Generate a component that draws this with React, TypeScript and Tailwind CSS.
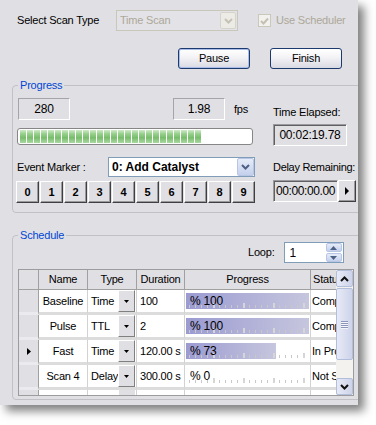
import React from "react";

const rows = [
  { name: "Baseline", type: "Time", dur: "100", pct: 100, status: "Completed" },
  { name: "Pulse", type: "TTL", dur: "2", pct: 100, status: "Completed" },
  { name: "Fast", type: "Time", dur: "120.00 s", pct: 73, status: "In Progress", current: true },
  { name: "Scan 4", type: "Delay", dur: "300.00 s", pct: 0, status: "Not Started" },
];

function Chevron({ color = "#4d6185", up = false }: { color?: string; up?: boolean }) {
  return (
    <svg width="9" height="6" viewBox="0 0 9 6">
      <path d={up ? "M1 5 L4.5 1.5 L8 5" : "M1 1 L4.5 4.5 L8 1"} fill="none" stroke={color} strokeWidth="2" />
    </svg>
  );
}

function XpButton({ label, focused }: { label: string; focused?: boolean }) {
  return (
    <button
      className={`w-[72px] h-[21px] rounded-[3px] border border-[#1c3a6e] bg-[linear-gradient(to_bottom,#ffffff,#f3f3f6_45%,#d9d9e2)] text-[11px] leading-none ${
        focused ? "shadow-[inset_0_0_0_1px_#a9bde8]" : ""
      }`}
    >
      {label}
    </button>
  );
}

function Legend({ text }: { text: string }) {
  return (
    <span className="absolute left-[5px] -top-[8px] px-[2px] bg-[#e0dfe3] text-[#0046d5] leading-[14px]">
      {text}
    </span>
  );
}

function ProgressCell({ pct }: { pct: number }) {
  return (
    <div className="relative h-[16px] mt-[3px] ml-[1px] mr-[1px]">
      {pct > 0 && (
        <div
          className="h-full bg-[linear-gradient(to_right,#9b9bd2,#c6c6de)]"
          style={{ width: `${pct}%` }}
        />
      )}
      <div className="absolute left-[3px] right-[4px] bottom-[1px] h-[3px] bg-[repeating-linear-gradient(to_right,#c8c8c8_0,#c8c8c8_1px,transparent_1px,transparent_6px)]" />
      <div className="absolute left-[27px] right-[4px] bottom-[1px] h-[5px] bg-[repeating-linear-gradient(to_right,#d6d6d6_0,#d6d6d6_2px,transparent_2px,transparent_30px)]" />
      <span className="absolute left-[4px] top-0 h-full flex items-center text-[12px] leading-none">
        % {pct}
      </span>
    </div>
  );
}

export default function App() {
  return (
    <div className="w-[376px] h-[425px] bg-white font-['Liberation_Sans',Arial,sans-serif] text-[11px] tracking-[-0.2px] text-black">
      <div className="w-[358px] h-[405px] bg-[#e0dfe3] overflow-hidden shadow-[6px_6px_9px_rgba(0,0,0,0.5)] flex flex-col">
        {/* scan type row */}
        <div className="flex items-center h-[21px] mt-[10px] pl-[17px]">
          <span className="w-[99px]">Select Scan Type</span>
          <div className="w-[122px] h-[21px] border border-[#c9c7ba] bg-[#e3e2e6] flex items-center justify-between">
            <span className="pl-[3px] text-[#aca899]">Time Scan</span>
            <div className="w-[16px] h-[17px] mr-[1px] rounded-[2px] border border-[#d6d4ca] bg-[#ecebe6] flex items-center justify-center">
              <Chevron color="#c5c2b4" />
            </div>
          </div>
          <div className="ml-[20px] w-[13px] h-[13px] border border-[#cac8bb] bg-[#f2f1ed] flex items-center justify-center">
            <svg width="9" height="8" viewBox="0 0 9 8">
              <path d="M1 4 L3.5 6.5 L8 1.5" fill="none" stroke="#c3c0b2" strokeWidth="2" />
            </svg>
          </div>
          <span className="ml-[5px] text-[#aca899]">Use Scheduler</span>
        </div>

        {/* buttons */}
        <div className="flex gap-[20px] mt-[17px] pl-[178px]">
          <XpButton label="Pause" focused />
          <XpButton label="Finish" />
        </div>

        {/* progress group */}
        <div className="relative mt-[16px] ml-[12px] w-[360px] h-[128px] shrink-0 border border-[#c2c1c6] rounded-[4px]">
          <Legend text="Progress" />
          <div className="flex pt-[12px]">
            <div className="flex flex-col w-[256px] ml-[4px]">
              <div className="flex items-center h-[22px]">
                <div className="ml-[1px] w-[52px] h-[22px] border border-t-[#a5a4a8] border-l-[#a5a4a8] border-b-white border-r-white flex items-center justify-center text-[12px]">
                  280
                </div>
                <div className="ml-[103px] w-[52px] h-[22px] border border-t-[#a5a4a8] border-l-[#a5a4a8] border-b-white border-r-white flex items-center justify-center text-[12px]">
                  1.98
                </div>
                <span className="ml-[9px]">fps</span>
              </div>
              <div className="mt-[8px] w-[236px] h-[17px] rounded-[3px] border border-[#868686] bg-white flex items-center gap-[1px] pl-[2px]">
                {Array.from({ length: 26 }).map((_, i) => (
                  <div
                    key={i}
                    className="w-[6px] h-[13px] bg-[linear-gradient(to_bottom,#cfeac9,#96cf8b_30%,#79bc6d_60%,#a9d9a0)]"
                  />
                ))}
              </div>
              <div className="mt-[12px] flex items-center h-[20px]">
                <span className="w-[91px]">Event Marker :</span>
                <div className="w-[147px] h-[20px] border border-[#7f9db9] bg-white flex items-center justify-between">
                  <span className="pl-[3px] font-bold text-[12px] leading-none tracking-normal">0: Add Catalyst</span>
                  <div className="w-[17px] h-[18px] rounded-[2px] border border-[#b8c6e6] bg-[linear-gradient(to_bottom,#e6ecf8,#c4d0ec)] flex items-center justify-center">
                    <Chevron />
                  </div>
                </div>
              </div>
              <div className="mt-[4px] -ml-[1px] flex gap-[1px]">
                {Array.from({ length: 10 }).map((_, i) => (
                  <div
                    key={i}
                    className="w-[23px] h-[22px] border border-t-white border-l-white border-b-[#404040] border-r-[#404040] shadow-[inset_-1px_-1px_0_#9a9a9e] flex items-center justify-center font-bold text-[11px]"
                  >
                    {i}
                  </div>
                ))}
              </div>
            </div>
            <div className="flex flex-col">
              <span className="mt-[8px] leading-[13px]">Time Elapsed:</span>
              <div className="mt-[5px] w-[74px] h-[22px] border border-t-[#9a9a9e] border-l-[#9a9a9e] border-b-white border-r-white shadow-[inset_1px_1px_0_#606060] flex items-center justify-center text-[12px]">
                00:02:19.78
              </div>
              <span className="mt-[15px] leading-[13px] whitespace-nowrap tracking-[-0.3px]">Delay Remaining:</span>
              <div className="mt-[6px] flex">
                <div className="w-[65px] h-[22px] border border-t-[#9a9a9e] border-l-[#9a9a9e] border-b-white border-r-white shadow-[inset_1px_1px_0_#606060] flex items-center justify-center text-[12px] tracking-[-0.4px]">
                  00:00:00.00
                </div>
                <div className="w-[18px] h-[22px] border border-t-white border-l-white border-b-[#404040] border-r-[#404040] shadow-[inset_-1px_-1px_0_#9a9a9e] flex items-center justify-center">
                  <svg width="5" height="8" viewBox="0 0 5 8">
                    <path d="M0 0 L4 4 L0 8 Z" fill="black" />
                  </svg>
                </div>
              </div>
            </div>
          </div>
        </div>

        {/* schedule group */}
        <div className="relative mt-[22px] ml-[12px] w-[360px] h-[165px] shrink-0 border border-[#c2c1c6] rounded-[4px]">
          <Legend text="Schedule" />
          <div className="flex items-center mt-[6px] pl-[235px]">
            <span>Loop:</span>
            <div className="ml-[9px] w-[60px] h-[21px] border border-[#7f9db9] bg-white flex items-center justify-between">
              <span className="pl-[5px] text-[12px]">1</span>
              <div className="flex flex-col gap-[1px] mr-[1px]">
                <div className="w-[16px] h-[9px] rounded-[2px] border border-[#b8c6e6] bg-[linear-gradient(to_bottom,#e6ecf8,#c4d0ec)] flex items-center justify-center">
                  <svg width="7" height="4" viewBox="0 0 7 4"><path d="M0 4 L3.5 0 L7 4 Z" fill="#4d6185" /></svg>
                </div>
                <div className="w-[16px] h-[9px] rounded-[2px] border border-[#b8c6e6] bg-[linear-gradient(to_bottom,#e6ecf8,#c4d0ec)] flex items-center justify-center">
                  <svg width="7" height="4" viewBox="0 0 7 4"><path d="M0 0 L3.5 4 L7 0 Z" fill="#4d6185" /></svg>
                </div>
              </div>
            </div>
          </div>

          {/* grid */}
          <div className="mt-[6px] ml-[5px] w-[336px] h-[127px] border border-[#9c9c9c] bg-white flex overflow-hidden">
            <div className="w-[317px] flex flex-col">
              <div className="flex h-[20px] shrink-0 bg-[#e0dfe3] border-b border-[#a0a0a0]">
                <div className="w-[20px] border-r border-[#a0a0a0]" />
                <div className="w-[49px] border-r border-[#a0a0a0] flex items-center justify-center">Name</div>
                <div className="w-[49px] border-r border-[#a0a0a0] flex items-center justify-center">Type</div>
                <div className="w-[48px] border-r border-[#a0a0a0] flex items-center justify-center">Duration</div>
                <div className="w-[126px] border-r border-[#a0a0a0] flex items-center justify-center">Progress</div>
                <div className="w-[25px] pl-[2px] flex items-center overflow-hidden whitespace-nowrap">Status</div>
              </div>
              {rows.map((r) => (
                <div key={r.name} className="flex h-[25px] shrink-0">
                  <div className="w-[20px] bg-[#e0dfe3] border-r border-[#a0a0a0] border-b-[3px] border-b-[#ebeaee] flex items-center justify-center">
                    {r.current && (
                      <svg width="4" height="7" viewBox="0 0 4 7">
                        <path d="M0 0 L4 3.5 L0 7 Z" fill="black" />
                      </svg>
                    )}
                  </div>
                  <div className="w-[49px] border-r border-[#d2d2d2] border-b-[3px] border-b-[#dcdcdc] flex items-center justify-center">
                    {r.name}
                  </div>
                  <div className="w-[49px] border-r border-[#d2d2d2] border-b-[3px] border-b-[#dcdcdc] flex items-center justify-between">
                    <span className="pl-[3px]">{r.type}</span>
                    <div className="w-[17px] h-full mr-[1px] bg-[#e0dfe3] border border-t-white border-l-white border-b-[#808080] border-r-[#808080] flex items-center justify-center">
                      <svg width="5" height="3" viewBox="0 0 5 3"><path d="M0 0 L2.5 3 L5 0 Z" fill="black" /></svg>
                    </div>
                  </div>
                  <div className="w-[48px] border-r border-[#d2d2d2] border-b-[3px] border-b-[#dcdcdc] flex items-center pl-[3px] whitespace-nowrap overflow-hidden">
                    {r.dur}
                  </div>
                  <div className="w-[126px] border-r border-[#d2d2d2] border-b-[3px] border-b-[#dcdcdc]">
                    <ProgressCell pct={r.pct} />
                  </div>
                  <div className="w-[25px] border-b-[3px] border-b-[#dcdcdc] flex items-center pl-[1px] whitespace-nowrap overflow-hidden">
                    {r.status}
                  </div>
                </div>
              ))}
              <div className="flex h-[6px] shrink-0">
                <div className="w-[20px] bg-[#e0dfe3] border-r border-[#a0a0a0]" />
                <div className="w-[49px] border-r border-[#d2d2d2]" />
                <div className="w-[49px] border-r border-[#d2d2d2] flex justify-end">
                  <div className="w-[17px] h-full mr-[1px] bg-[#e0dfe3] border-l border-white" />
                </div>
                <div className="w-[48px] border-r border-[#d2d2d2]" />
                <div className="w-[126px] border-r border-[#d2d2d2]" />
              </div>
            </div>

            {/* scrollbar */}
            <div className="w-[17px] bg-[#f3f2ef] flex flex-col">
              <div className="h-[17px] rounded-[2px] border border-[#b3bedc] bg-[linear-gradient(to_right,#e7eaf6,#cdd3ea)] flex items-center justify-center">
                <Chevron color="#111" up />
              </div>
              <div className="mt-[1px] h-[72px] rounded-[2px] border border-[#b3bedc] bg-[linear-gradient(to_right,#e7eaf6,#cdd3ea)] flex flex-col items-center justify-center gap-[1px]">
                {[0, 1, 2, 3].map((i) => (
                  <div key={i} className="w-[7px] h-[1px] bg-[#8c96b8] shadow-[0_1px_0_#f4f6fc]" />
                ))}
              </div>
              <div className="flex-1" />
              <div className="h-[17px] rounded-[2px] border border-[#b3bedc] bg-[linear-gradient(to_right,#e7eaf6,#cdd3ea)] flex items-center justify-center">
                <Chevron color="#111" />
              </div>
            </div>
          </div>
        </div>
      </div>
    </div>
  );
}
